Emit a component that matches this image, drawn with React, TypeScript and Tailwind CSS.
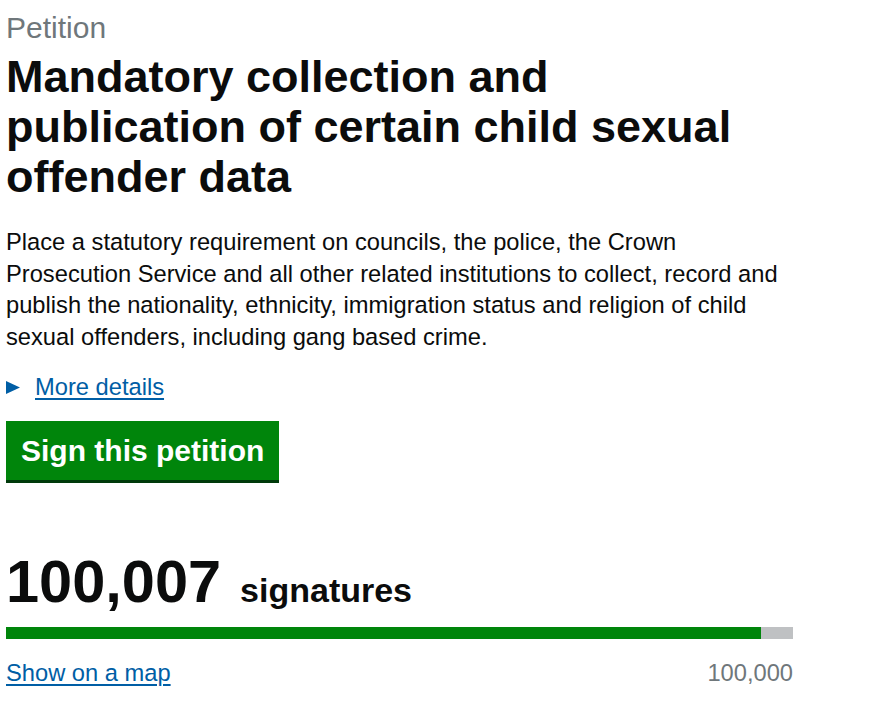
import React from "react";

export default function App() {
  return (
    <div className="bg-white min-h-screen text-[#0b0c0c]" style={{ fontFamily: '"Liberation Sans", Arial, sans-serif' }}>
      <div className="w-[787px] ml-[6px] pt-[11px]">
        <p className="text-[30px] leading-[34px] text-[#6f777b]">Petition</p>
        <h1 className="text-[45px] leading-[50px] font-bold mt-[7px] pr-[40px]">
          Mandatory collection and publication of certain child sexual offender data
        </h1>
        <p className="text-[23.7px] leading-[31.5px] mt-[25px]">
          Place a statutory requirement on councils, the police, the Crown Prosecution Service and all other related
          institutions to collect, record and publish the nationality, ethnicity, immigration status and religion of
          child sexual offenders, including gang based crime.
        </p>
        <div className="mt-[19px] flex items-center text-[23.7px] leading-[31px]">
          <span className="w-[29px] flex items-center">
            <svg width="14" height="13" viewBox="0 0 14 13" className="block">
              <polygon points="0,0 14,6.5 0,13" fill="#005ea5" />
            </svg>
          </span>
          <a href="#" className="text-[#005ea5] underline underline-offset-[3px]">More details</a>
        </div>
        <button className="mt-[18px] bg-[#00850b] text-white font-bold text-[30px] leading-[35px] px-[15px] pt-[12px] pb-[12px] shadow-[0_3px_0_#003a0a]">
          Sign this petition
        </button>
        <div className="mt-[70px] flex items-baseline h-[64px]">
          <span className="text-[59.5px] leading-[64px] font-bold">100,007</span>
          <span className="text-[34px] font-bold ml-[19px]">signatures</span>
        </div>
        <div className="mt-[13px] h-[12px] bg-[#bfc1c3]">
          <div className="h-full bg-[#00850b]" style={{ width: `${(755 / 787) * 100}%` }} />
        </div>
        <div className="mt-[19px] flex justify-between text-[23.7px] leading-[31px]">
          <a href="#" className="text-[#005ea5] underline underline-offset-[3px]">Show on a map</a>
          <span className="text-[#6f777b]">100,000</span>
        </div>
      </div>
    </div>
  );
}
